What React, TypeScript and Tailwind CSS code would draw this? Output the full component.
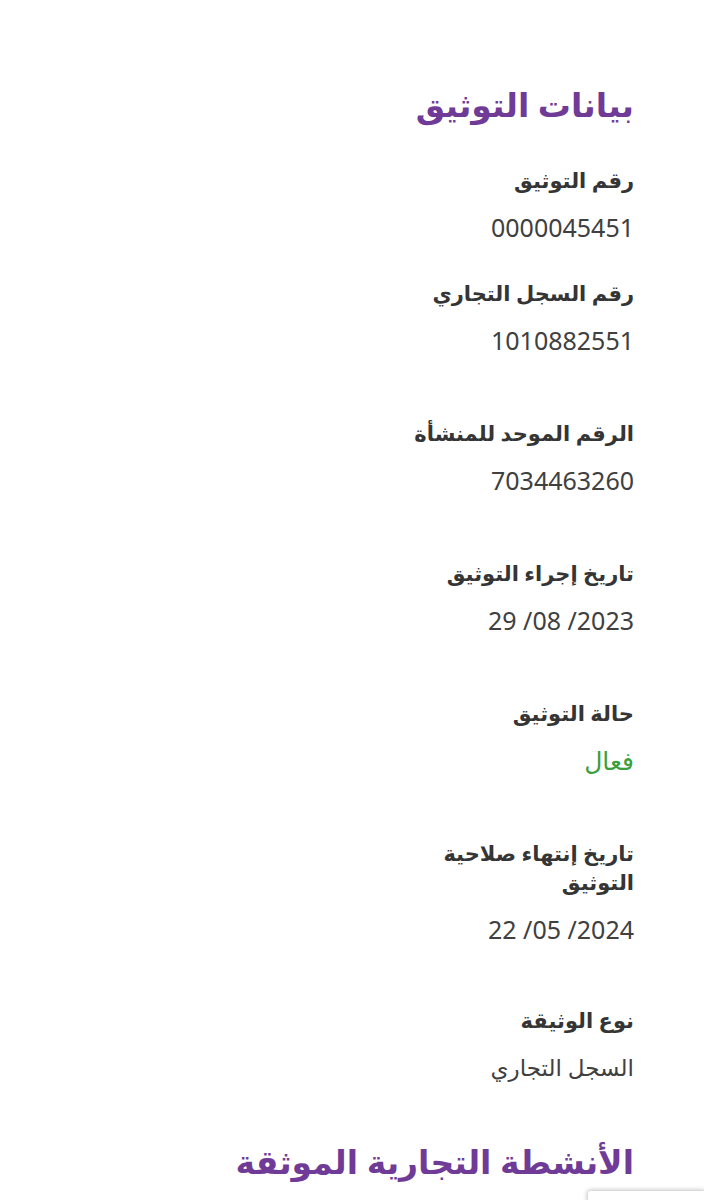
const items: { label: string; value: string; green?: boolean; gap: string }[] = [
  { label: "رقم التوثيق", value: "0000045451", gap: "mb-[37px]" },
  { label: "رقم السجل التجاري", value: "1010882551", gap: "mb-[64px]" },
  { label: "الرقم الموحد للمنشأة", value: "7034463260", gap: "mb-[64px]" },
  { label: "تاريخ إجراء التوثيق", value: "29 /08 /2023", gap: "mb-[64px]" },
  { label: "حالة التوثيق", value: "فعال", green: true, gap: "mb-[64px]" },
  { label: "تاريخ إنتهاء صلاحية التوثيق", value: "22 /05 /2024", gap: "mb-[62px]" },
  { label: "نوع الوثيقة", value: "السجل التجاري", gap: "mb-[55px]" },
];

export default function App() {
  return (
    <div
      dir="rtl"
      className="min-h-[1200px] bg-white pr-[70px] pl-[40px] pt-[80px] overflow-hidden"
      style={{ fontFamily: '"Noto Sans", "DejaVu Sans", sans-serif' }}
    >
      <h2 className="text-[33px] leading-[50px] font-bold text-[#6f3b97] mb-[36px]">بيانات التوثيق</h2>

      {items.map((it) => {
        const arabic = it.green || it.value.includes("السجل");
        return (
          <div key={it.label} className={it.gap}>
            <div className="w-[240px] text-[21px] leading-[29px] font-bold text-[#353535]">{it.label}</div>
            <div
              className={`mt-[17px] leading-[30px] ${arabic && !it.green ? "text-[23px]" : "text-[25px]"} ${it.green ? "text-[#3b9f3b]" : "text-[#404040]"}`}
              style={{ direction: arabic ? "rtl" : "ltr", textAlign: "right" }}
            >
              {it.value}
            </div>
          </div>
        );
      })}

      <h2 className="text-[33px] leading-[50px] font-bold text-[#6f3b97]">الأنشطة التجارية الموثقة</h2>

      <div className="fixed right-0 top-[1191px] h-[70px] w-[116px] rounded-tl-[3px] bg-white shadow-[0_0_4px_1px_rgba(0,0,0,0.25)]" />
    </div>
  );
}
